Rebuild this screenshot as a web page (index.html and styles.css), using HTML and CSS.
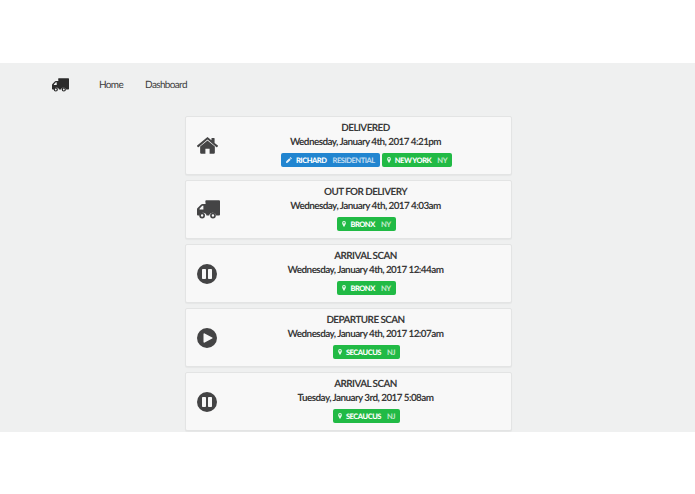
FILE: index.html
```html
<!DOCTYPE html>
<html lang="en">
<head>
<meta charset="utf-8">
<title>Tracking</title>
<link rel="stylesheet" href="styles.css">
</head>
<body>
<svg class="defs" width="0" height="0" aria-hidden="true">
  <symbol id="truck" viewBox="0 0 36 29">
    <path d="M13 1.500a1.500 1.500 0 0 1 1.500-1.500h20a1.500 1.500 0 0 1 1.500 1.500v21a1.500 1.500 0 0 1-1.500 1.500h-4.600a5.500 5.500 0 0 0-10.800 0h-4.200a5.500 5.500 0 0 0-10.800 0h-2.600a1.500 1.500 0 0 1-1.500-1.500v-8.100a3 3 0 0 1 .9-2.100l5.600-5.600a3 3 0 0 1 2.100-.9h4.900zM3.900 14.500h6.100v-6h-1.100a1 1 0 0 0-.7.300l-4 4z"/>
    <path fill-rule="evenodd" d="M8 19.500a4.500 4.500 0 1 1 0 9a4.500 4.500 0 0 1 0-9zm0 2.600a1.900 1.900 0 1 0 0 3.800a1.900 1.900 0 0 0 0-3.800zM25 19.500a4.500 4.500 0 1 1 0 9a4.500 4.500 0 0 1 0-9zm0 2.600a1.900 1.900 0 1 0 0 3.800a1.900 1.900 0 0 0 0-3.800z"/>
  </symbol>
  <symbol id="home" viewBox="0 0 40 32">
    <path d="M20 6.500 6 18v12a1.500 1.500 0 0 0 1.500 1.500H16V22h8v9.500h8.500A1.500 1.500 0 0 0 34 30V18z"/>
    <path d="M20 0 .3 16.200a.9.900 0 0 0-.1 1.300l1.300 1.500a.9.900 0 0 0 1.300.1L20 4.600l17.200 14.500a.9.900 0 0 0 1.300-.1l1.300-1.500a.9.900 0 0 0-.1-1.300L33.500 11V2.500a1 1 0 0 0-1-1h-4a1 1 0 0 0-1 1v3.500z"/>
  </symbol>
  <symbol id="pause" viewBox="0 0 20 20">
    <path fill-rule="evenodd" d="M10 0a10 10 0 1 1 0 20a10 10 0 0 1 0-20zM5.800 5a.8.800 0 0 0-.8.800v8.400a.8.800 0 0 0 .8.800h2.400a.8.800 0 0 0 .8-.8V5.800a.8.800 0 0 0-.8-.8zm6 0a.8.800 0 0 0-.8.800v8.400a.8.800 0 0 0 .8.800h2.400a.8.800 0 0 0 .8-.8V5.800a.8.800 0 0 0-.8-.8z"/>
  </symbol>
  <symbol id="play" viewBox="0 0 20 20">
    <path fill-rule="evenodd" d="M10 0a10 10 0 1 1 0 20a10 10 0 0 1 0-20zM7.200 5.200a.7.700 0 0 0-.7.700v8.200a.7.700 0 0 0 .7.700l8-4.200a.7.700 0 0 0 0-1.200z"/>
  </symbol>
  <symbol id="pin" viewBox="0 0 10 16">
    <path fill-rule="evenodd" d="M5 0a5 5 0 0 1 5 5c0 2.600-3.200 8.500-5 11C3.200 13.500 0 7.600 0 5a5 5 0 0 1 5-5zm0 2.800a2.200 2.200 0 1 0 0 4.400a2.200 2.200 0 0 0 0-4.400z"/>
  </symbol>
  <symbol id="pencil" viewBox="0 0 16 16">
    <path d="M11.500.8a1 1 0 0 1 1.400 0l2.300 2.300a1 1 0 0 1 0 1.400l-1.500 1.500L10 2.300zM8.900 3.400l3.700 3.700L4.400 15.300 0 16l.7-4.400z"/>
  </symbol>
</svg>
<div class="top"></div>
<main class="page">
  <nav class="nav">
    <svg class="logo"><use href="#truck"/></svg>
    <a class="link">Home</a>
    <a class="link">Dashboard</a>
  </nav>
  <section class="list">
    <article class="card">
      <div class="slot"><svg class="icon icon-home"><use href="#home"/></svg></div>
      <div class="body">
        <div class="title">DELIVERED</div>
        <div class="date">Wednesday, January 4th, 2017 4:21pm</div>
        <div class="labels">
          <span class="label blue"><svg class="gl"><use href="#pencil"/></svg>RICHARD<span class="detail">RESIDENTIAL</span></span>
          <span class="label green"><svg class="gl pin"><use href="#pin"/></svg>NEW YORK<span class="detail">NY</span></span>
        </div>
      </div>
    </article>
    <article class="card">
      <div class="slot"><svg class="icon icon-truck"><use href="#truck"/></svg></div>
      <div class="body">
        <div class="title">OUT FOR DELIVERY</div>
        <div class="date">Wednesday, January 4th, 2017 4:03am</div>
        <div class="labels">
          <span class="label green"><svg class="gl pin"><use href="#pin"/></svg>BRONX<span class="detail">NY</span></span>
        </div>
      </div>
    </article>
    <article class="card">
      <div class="slot"><svg class="icon icon-round"><use href="#pause"/></svg></div>
      <div class="body">
        <div class="title">ARRIVAL SCAN</div>
        <div class="date">Wednesday, January 4th, 2017 12:44am</div>
        <div class="labels">
          <span class="label green"><svg class="gl pin"><use href="#pin"/></svg>BRONX<span class="detail">NY</span></span>
        </div>
      </div>
    </article>
    <article class="card">
      <div class="slot"><svg class="icon icon-round"><use href="#play"/></svg></div>
      <div class="body">
        <div class="title">DEPARTURE SCAN</div>
        <div class="date">Wednesday, January 4th, 2017 12:07am</div>
        <div class="labels">
          <span class="label green"><svg class="gl pin"><use href="#pin"/></svg>SECAUCUS<span class="detail">NJ</span></span>
        </div>
      </div>
    </article>
    <article class="card">
      <div class="slot"><svg class="icon icon-round"><use href="#pause"/></svg></div>
      <div class="body">
        <div class="title">ARRIVAL SCAN</div>
        <div class="date">Tuesday, January 3rd, 2017 5:08am</div>
        <div class="labels">
          <span class="label green"><svg class="gl pin"><use href="#pin"/></svg>SECAUCUS<span class="detail">NJ</span></span>
        </div>
      </div>
    </article>
  </section>
</main>
</body>
</html>
```

FILE: styles.css
```css
html, body {
  margin: 0;
  padding: 0;
  background: #fff;
}
body {
  font-family: Lato, "Open Sans", sans-serif;
  color: #383838;
  height: 494px;
  overflow: hidden;
  text-rendering: geometricPrecision;
}
.defs {
  display: none;
}
.top {
  height: 63px;
}
.page {
  height: 369px;
  background: #eff0f0;
  overflow: hidden;
}
.nav {
  display: flex;
  align-items: center;
  height: 43px;
  padding-left: 52px;
}
.logo {
  width: 17px;
  height: 14px;
  fill: #2b2b2b;
  margin-right: 30px;
}
.link {
  font-size: 10px;
  letter-spacing: -.65px;
  color: #3c3c3c;
  margin-right: 22px;
}
.list {
  display: flex;
  flex-direction: column;
  gap: 5px;
  width: 327px;
  margin: 10px 0 0 185px;
}
.card {
  box-sizing: border-box;
  height: 59px;
  display: flex;
  align-items: center;
  background: #f8f8f8;
  border: 1px solid #e3e4e4;
  border-radius: 2px;
  box-shadow: 0 1px 1px rgba(0, 0, 0, .04);
  padding-left: 11px;
}
.slot {
  flex: none;
  width: 23px;
  display: flex;
  align-items: center;
}
.icon {
  fill: #444445;
  flex: none;
}
.icon-home {
  width: 21px;
  height: 17px;
}
.icon-truck {
  width: 23px;
  height: 19px;
}
.icon-round {
  width: 20px;
  height: 20px;
}
.body {
  flex: 1;
  text-align: center;
  margin-top: -3px;
}
.title, .date {
  font-size: 9.9px;
  font-weight: 700;
  line-height: 14px;
  letter-spacing: -.55px;
  color: #3a3a3a;
}
.labels {
  display: flex;
  justify-content: center;
  gap: 2px;
  margin-top: 4px;
  padding-left: 2px;
}
.label {
  display: inline-flex;
  align-items: center;
  height: 14px;
  padding: 0 5px;
  border-radius: 2px;
  font-size: 7.5px;
  font-weight: 900;
  letter-spacing: -.45px;
  color: #fff;
}
.blue {
  background: #2185d0;
}
.green {
  background: #21ba45;
}
.detail {
  margin-left: 6px;
  font-weight: 700;
  opacity: .72;
}
.gl {
  width: 6px;
  height: 6px;
  fill: #fff;
  margin-right: 4px;
  opacity: .9;
}
.gl.pin {
  width: 4px;
  height: 6px;
}
```
